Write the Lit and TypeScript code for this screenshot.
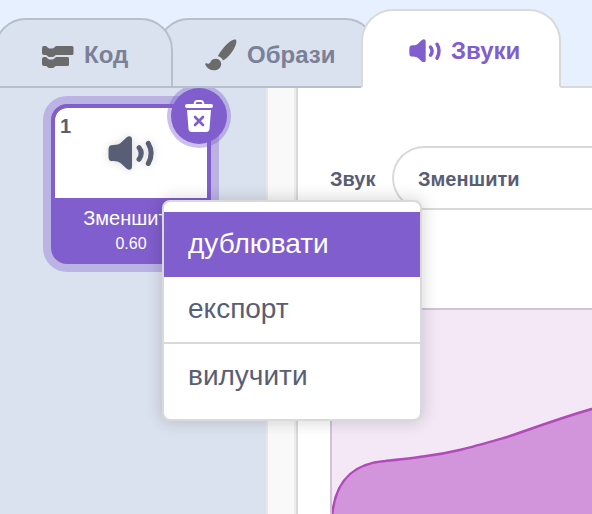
import { LitElement, html, css, svg } from "lit";
import { customElement, property, state } from "lit/decorators.js";
import { classMap } from "lit/directives/class-map.js";

const speaker = html`<svg class="icon speaker" viewBox="0 0 46 34" aria-hidden="true">
  <path
    d="M3 9.3C6 8.7 9.500 9.300 12 7.500L18.500 1.500C21 -.600 24 0 24 3.500V30.500C24 34 21 34.600 18.500 32.500L12.500 27C9.500 24.800 6 25.500 3 25C1 24.500 .5 23 .5 20V14.500C.5 11.500 1 9.800 3 9.300Z"
    fill="currentColor"
  />
  <path
    d="M31 11.700Q35.500 17.200 31 23.300M40.300 7.500Q46 17 40.300 27.500"
    fill="none"
    stroke="currentColor"
    stroke-width="5"
    stroke-linecap="round"
  />
</svg>`;

const blocks = html`<svg class="icon" viewBox="0 -4 32 28" aria-hidden="true">
  <g fill="currentColor">
    <path d="M2 1H3.800C5.300 1 5.500 3.500 7.500 3.500H10.500C12.500 3.500 12.500 1 14.500 1H30Q31.500 1 31.500 2.500V8.500Q31.500 10 30 10H14.500C12.500 10 12.500 12 10.500 12H7.500C5.500 12 5.300 10 3.800 10H2Q0 10 0 8V3Q0 1 2 1Z" />
    <path d="M2 12H3.800C5.300 12 5.500 14.500 7.500 14.500H10.500C12.500 14.500 12.500 12 14.500 12H25.500Q27 12 27 13.500V19.500Q27 21 25.500 21H14.500C12.500 21 12.500 23 10.500 23H7.500C5.500 23 5.300 21 3.800 21H2Q0 21 0 19V14Q0 12 2 12Z" />
  </g>
</svg>`;

const brush = html`<svg class="icon" viewBox="0 0 32 32" aria-hidden="true">
  <g fill="currentColor">
    <path d="M30.500 .600C27.500 -.200 22.500 4 18.800 8.500C16 12 13.800 15 12.800 17.300C15.300 17.800 17.300 19.400 18 21.600C21 20 25 16 28 11.500C30.800 7 32.500 1.500 30.500 .600Z" />
    <path d="M11.200 19.700C14.500 20 16.500 22.500 16.200 25.500C15.800 29.500 12 31.700 8 31.300C4.500 31 1.500 28.500 .3 25.500C0 24.500 .8 23.800 1.600 24.300C3 25.200 4.700 24.800 5.500 23C6.500 20.500 8.800 19.500 11.200 19.700Z" />
  </g>
</svg>`;

const trash = svg`<path d="M10.500 4.500L11 2.500Q11.400 1 13 1H17Q18.600 1 19 2.500L19.500 4.500" fill="none" stroke="currentColor" stroke-width="2" />
  <rect x="1" y="4" width="28" height="4" rx="2" fill="currentColor" />
  <path d="M3 10H27L25.500 29Q25.200 32 22 32H8Q4.800 32 4.500 29Z" fill="currentColor" />
  <path class="cross" d="M11 17L19 25M19 17L11 25" fill="none" stroke-width="2.600" stroke-linecap="round" />`;

@customElement("editor-tabs")
class EditorTabs extends LitElement {
  @state() selected = "sounds";

  static styles = css`
    .tabs {
      display: flex;
      align-items: flex-end;
      height: 88px;
      margin-left: -6px;
      isolation: isolate;
      background: linear-gradient(#d9d9d9, #d9d9d9) bottom / 100% 2px no-repeat;
    }
    .tab {
      display: flex;
      align-items: center;
      justify-content: flex-start;
      gap: 10px;
      box-sizing: border-box;
      height: 70px;
      padding: 4px 40px 0 46px;
      border: 2px solid #b8bfcc;
      border-radius: 32px 32px 0 0;
      background: #dbe2ef;
      color: #7a8096;
      font: bold 24px/32px "Liberation Sans", Arial, sans-serif;
      white-space: nowrap;
    }
    .code {
      position: relative;
      z-index: 1;
      width: 179px;
    }
    .costumes {
      width: 220px;
      margin: 0 -16px;
    }
    .sounds {
      width: 200px;
    }
    .selected {
      position: relative;
      z-index: 2;
      height: 79px;
      border-color: #d9d9d9;
      border-bottom-color: #fff;
      background: #fff;
      color: #805ecd;
    }
    .icon {
      flex: none;
      width: 32px;
      color: #6b6b6b;
    }
    .selected .icon {
      color: inherit;
    }
  `;

  render() {
    const tabs = [
      { id: "code", label: "Код", icon: blocks },
      { id: "costumes", label: "Образи", icon: brush },
      { id: "sounds", label: "Звуки", icon: speaker },
    ];
    return html`<div class="tabs" role="tablist">
      ${tabs.map(
        (t) => html`<button
          role="tab"
          class=${classMap({ tab: true, [t.id]: true, selected: t.id === this.selected })}
          aria-selected=${t.id === this.selected ? "true" : "false"}
          @click=${() => (this.selected = t.id)}
        >${t.icon}<span>${t.label}</span></button>`
      )}
    </div>`;
  }
}

@customElement("sound-card")
class SoundCard extends LitElement {
  @property() name = "";
  @property() duration = "";
  @property({ type: Number }) index = 1;

  static styles = css`
    :host {
      display: block;
      position: relative;
      width: 160px;
      font-family: "Liberation Sans", Arial, sans-serif;
    }
    .card {
      box-sizing: border-box;
      height: 160px;
      overflow: hidden;
      border: 4px solid #805ecd;
      border-radius: 16px;
      background: #805ecd;
      box-shadow: 0 0 0 8px #bab3e4;
      color: #fff;
      text-align: center;
    }
    .preview {
      display: grid;
      grid-template-columns: 1fr 46px 1fr;
      align-items: center;
      height: 90px;
      border-radius: 12px 12px 0 0;
      background: #fff;
      color: #575e75;
    }
    .index {
      align-self: start;
      padding: 6px 0 0 5px;
      font: bold 20px/24px "Liberation Sans", Arial, sans-serif;
      text-align: left;
    }
    .icon {
      width: 46px;
      overflow: visible;
      filter: drop-shadow(0 0 4px rgba(0, 0, 0, 0.15));
    }
    .name {
      padding-top: 8px;
      font-size: 20px;
      line-height: 24px;
    }
    .duration {
      font-size: 16px;
      line-height: 28px;
    }
    .delete {
      position: absolute;
      top: -16px;
      right: -16px;
      display: grid;
      place-items: center;
      width: 56px;
      height: 56px;
      padding: 0;
      border: 0;
      border-radius: 50%;
      background: #805ecd;
      box-shadow: 0 0 0 4px rgba(128, 94, 205, 0.4);
      color: #fff;
    }
    .trash {
      width: 30px;
      height: 33px;
    }
    .cross {
      stroke: #805ecd;
    }
  `;

  render() {
    return html`<div class="card">
        <div class="preview"><span class="index">${this.index}</span>${speaker}</div>
        <div class="name">${this.name}</div>
        <div class="duration">${this.duration}</div>
      </div>
      <button class="delete" aria-label="вилучити">
        <svg class="trash" viewBox="0 0 30 33" aria-hidden="true">${trash}</svg>
      </button>`;
  }
}

@customElement("context-menu")
class ContextMenu extends LitElement {
  static styles = css`
    .menu {
      box-sizing: border-box;
      width: 260px;
      padding: 10px 0;
      border: 2px solid #d9d9d9;
      border-radius: 8px;
      background: #fff;
      box-shadow: 0 0 16px 2px rgba(0, 0, 0, 0.15);
    }
    .item {
      display: block;
      width: 100%;
      padding: 16px 24px 17px;
      border: 0;
      background: none;
      color: #575e75;
      font: 28px/32px "Liberation Sans", Arial, sans-serif;
      text-align: left;
    }
    .active {
      background: #805ecd;
      color: #fff;
    }
    .divided {
      border-top: 2px solid #d9d9d9;
    }
  `;

  render() {
    return html`<div class="menu" role="menu">
      <button class="item active" role="menuitem">дублювати</button>
      <button class="item" role="menuitem">експорт</button>
      <button class="item divided" role="menuitem">вилучити</button>
    </div>`;
  }
}

@customElement("sound-editor")
class SoundEditor extends LitElement {
  static styles = css`
    :host {
      display: flex;
      flex-direction: column;
      gap: 98px;
      padding: 58px 0 0 32px;
      background: #fff;
    }
    .row {
      display: flex;
      align-items: center;
      gap: 16px;
      color: #575e75;
      font: bold 20px/24px "Liberation Sans", Arial, sans-serif;
    }
    .label {
      min-width: 46px;
      padding-top: 2px;
    }
    .field {
      flex: 1;
      box-sizing: border-box;
      min-width: 0;
      height: 64px;
      padding: 2px 0 0 24px;
      border: 2px solid #d9d9d9;
      border-right: 0;
      border-radius: 32px 0 0 32px;
      background: #fff;
      color: inherit;
      font: inherit;
      outline: 0;
    }
    .wave {
      flex: 1;
      min-height: 0;
      overflow: hidden;
      border: solid #cfc4d3;
      border-width: 2px 0 0 2px;
      background: #f4e8f6;
    }
    .graph {
      display: block;
      width: 100%;
    }
  `;

  render() {
    return html`<div class="row">
        <label class="label" for="name">Звук</label>
        <input id="name" class="field" type="text" .value=${"Зменшити"} />
      </div>
      <div class="wave">
        <svg class="graph" viewBox="0 0 260 204" role="img" aria-label="Звук">
          <path
            d="M0 208C2 176 16 154 53 151C72 149 82 148 91 146.500C120 143 140 137 175 127C205 117 230 107 270 96V212H0Z"
            fill="#d294da"
            stroke="#b04bb9"
            stroke-width="2.500"
          />
        </svg>
      </div>`;
  }
}

@customElement("app-root")
class AppRoot extends LitElement {
  static styles = css`
    :host {
      display: flex;
      flex-direction: column;
      position: relative;
      height: 100vh;
      overflow: hidden;
      background: #e6f0ff;
    }
    .body {
      display: flex;
      flex: 1;
      min-height: 0;
    }
    .list {
      box-sizing: border-box;
      flex: none;
      width: 268px;
      padding: 16px 51px;
      overflow: hidden;
      border-right: 2px solid #e8e8e8;
      background: #dbe2ef;
    }
    .gutter {
      box-sizing: border-box;
      flex: none;
      width: 28px;
      border-right: 2px solid #ececec;
      background: #f9f9f9;
    }
    .editor {
      flex: 1;
      min-width: 0;
      border-left: 2px solid #d9d9d9;
    }
    .popup {
      position: absolute;
      top: 200px;
      left: 162px;
      z-index: 3;
    }
  `;

  render() {
    return html`<editor-tabs></editor-tabs>
      <div class="body">
        <div class="list"><sound-card name="Зменшити" duration="0.60" index="1"></sound-card></div>
        <div class="gutter"></div>
        <sound-editor class="editor"></sound-editor>
      </div>
      <context-menu class="popup"></context-menu>`;
  }
}
